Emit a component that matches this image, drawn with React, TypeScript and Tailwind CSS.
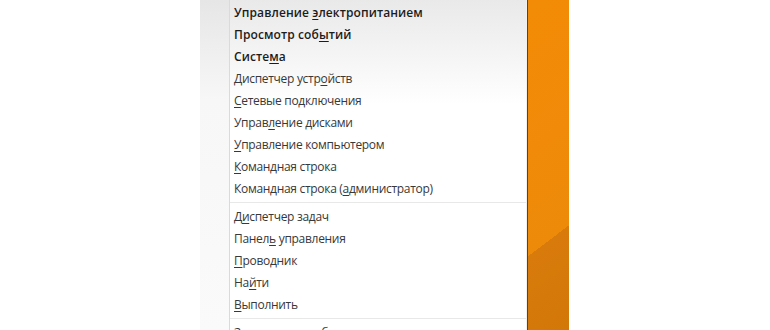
import React from "react";

type Item = { pre: string; u: string; post: string; bold?: boolean };

const group1: Item[] = [
  { pre: "Управление ", u: "э", post: "лектропитанием", bold: true },
  { pre: "Просмотр соб", u: "ы", post: "тий", bold: true },
  { pre: "Систе", u: "м", post: "а", bold: true },
  { pre: "Диспетчер устр", u: "о", post: "йств" },
  { pre: "", u: "С", post: "етевые подключения" },
  { pre: "Управ", u: "л", post: "ение дисками" },
  { pre: "", u: "У", post: "правление компьютером" },
  { pre: "", u: "К", post: "омандная строка" },
  { pre: "Командная строка (", u: "а", post: "дминистратор)" },
];

const group2: Item[] = [
  { pre: "Д", u: "и", post: "спетчер задач" },
  { pre: "Панел", u: "ь", post: " управления" },
  { pre: "", u: "П", post: "роводник" },
  { pre: "На", u: "й", post: "ти" },
  { pre: "", u: "В", post: "ыполнить" },
];

function Row({ item }: { item: Item }) {
  return (
    <div
      className={`h-[22px] flex items-center pl-[4px] whitespace-nowrap text-[12px] ${
        item.bold ? "font-semibold text-[#1c1c1c] tracking-[0.1px]" : "text-[#383838] tracking-[-0.3px]"
      }`}
    >
      <span>
        {item.pre}
        <span className="underline underline-offset-[2px] decoration-1">{item.u}</span>
        {item.post}
      </span>
    </div>
  );
}

function Sep() {
  return <div className="mt-[2px] mb-[3px] h-px bg-[#e8e8e8]" />;
}

export default function App() {
  return (
    <div
      className="w-[770px] h-[330px] bg-white flex overflow-hidden"
      style={{ fontFamily: '"Open Sans", "Noto Sans", sans-serif' }}
    >
      <div className="w-[200px] shrink-0 bg-white" />
      <div className="w-[30px] shrink-0 border-r border-[#dadada] bg-[linear-gradient(to_bottom,#e6e6e6,#f7f7f7_100px,#fafafa)]" />
      <div className="w-[297px] shrink-0 bg-[linear-gradient(to_bottom,#e9e9e9,#ffffff_105px)] border-r border-[#f0f0f0]">
        <div className="pt-[2px]">
          {group1.map((it, i) => (
            <Row key={i} item={it} />
          ))}
          <Sep />
          {group2.map((it, i) => (
            <Row key={i} item={it} />
          ))}
          <Sep />
          <Row item={{ pre: "Завершение ", u: "р", post: "аботы или выход из системы" }} />
        </div>
      </div>
      <div className="w-px shrink-0 bg-[#5a4326]" />
      <div className="w-[41px] shrink-0 bg-[linear-gradient(143deg,#f38b06_0%,#ee8a0a_71%,#d87b0c_71%,#d27808_100%)]" />
      <div className="flex-1 bg-white" />
    </div>
  );
}
